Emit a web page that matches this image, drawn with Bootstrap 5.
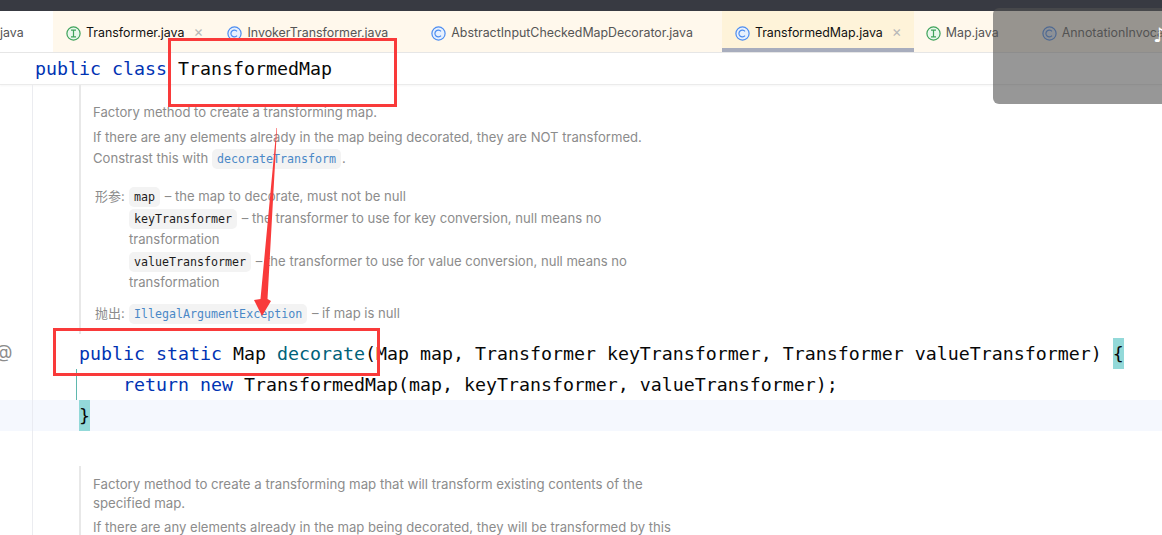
<!DOCTYPE html>
<html lang="en">
<head>
<meta charset="utf-8">
<title>TransformedMap.java</title>
<link href="https://cdn.jsdelivr.net/npm/bootstrap@5.3.0/dist/css/bootstrap.min.css" rel="stylesheet">
<style>
html,body{height:535px;overflow:hidden;background:#fff}
body{position:relative;font-family:Inter,"Noto Sans CJK SC",sans-serif;font-size:13.1px;color:#8c8c8c}
.titlestrip{height:11px;background:#383a42}
.tabstrip{height:42px;background:#fff8ec;border-bottom:1px solid #e6e6e6;white-space:nowrap;overflow:hidden;font-size:12.4px;color:#555}
.tabitem{height:41px;padding:3px 30px 0 13px;gap:5px;flex:none}
.tabitem svg{flex:none}
.tabhome{width:53px;background:#fff;padding:3px 0 0;flex:none;height:41px}
.tabdark{color:#111}
.tabopen{background:#fef3d9;box-shadow:inset 0 -4px 0 #a8adbd;padding-right:31px;margin-left:-1px}
.tabsnug{padding-left:12px}
.tabshut{color:#b8b8b8;font-size:15px;line-height:1;width:9px;margin:-4px -18px 0 4px;flex:none}
.crumbline{height:32px;padding-left:35px;border-bottom:1px solid #ebebeb;box-shadow:0 1px 2px rgba(0,0,0,.04)}
.monotxt{font-family:"DejaVu Sans Mono","Liberation Mono",monospace;font-size:18.27px;color:#080808;white-space:pre}
.kw{color:#0033b3}
.fn{color:#00627a}
.editorpane{height:451px;background:linear-gradient(#ebecf0,#ebecf0) 32px 0/1px 100% no-repeat}
.docblock{margin-left:79px;border-left:2px solid #e8e8e8;padding-left:12px;line-height:21px;width:600px}
.docfirst{padding-top:17px;padding-bottom:10px;margin-bottom:4px;height:249px}
.docnext{margin-top:35px;padding-top:9px;white-space:nowrap}
.docblock p{margin:0}
.gapfour{margin-top:4px!important}
.gapseventeen{margin-top:17px!important}
.gapnine{margin-top:9px!important}
.tight{line-height:19px;font-size:13.24px}
.paramrow{display:grid;grid-template-columns:36px 1fr;line-height:21.5px}
.labelcn{font-size:13px;color:#8c8c8c;padding-left:2px}
.chip{font-family:"DejaVu Sans Mono","Liberation Mono",monospace;font-size:11.65px;line-height:1;background:#f3f3f3;border-radius:5px;padding:3px 5px;color:#1c1c1c;margin-right:1px}
.chiplink{color:#4a88c7}
.coderow{height:31px;padding-left:79px;line-height:31px}
.coderow.deep{padding-left:123px;position:relative}
.changebar{position:absolute;left:76px;top:0;width:1px;height:31px;background:#5fb8ae}
.coderow.focusrow{background:linear-gradient(#e9ebf2,#e9ebf2) 32px 0/1px 100% no-repeat,#f5f8fe}
.brace{background:#93d9d9;display:inline-block;height:31px;vertical-align:top}
.atsign{position:absolute;left:-5px;top:340px;font-size:18px;color:#8c8c8c;line-height:24px}
.redbox{position:absolute;border:3px solid #f93a3a;pointer-events:none}
.boxone{left:168px;top:38px;width:229px;height:69px}
.boxtwo{left:53px;top:328px;width:327px;height:48px}
.arrowlayer{position:absolute;left:0;top:0;pointer-events:none}
.shade{position:absolute;left:993px;top:8px;width:169px;height:96px;background:rgba(82,82,82,.6);border-radius:6px 0 0 6px}
.notemark{position:absolute;left:1153px;top:23px;color:#fff;font-size:20px;line-height:24px;font-family:"DejaVu Sans",sans-serif}
</style>
</head>
<body>
<svg width="0" height="0" class="position-absolute">
  <symbol id="ico-c" viewBox="0 0 15 15"><circle cx="7.5" cy="7.5" r="6.6" fill="#e7f0fe" stroke="#4d8df0" stroke-width="1.2"/><path d="M10 5.4A3.4 3.4 0 1 0 10 9.6" fill="none" stroke="#4d8df0" stroke-width="1.2"/></symbol>
  <symbol id="ico-i" viewBox="0 0 15 15"><circle cx="7.5" cy="7.5" r="6.6" fill="#e9f7ec" stroke="#3fa35b" stroke-width="1.2"/><path d="M5 4.2h5M5 10.8h5M7.5 4.2v6.6" fill="none" stroke="#3fa35b" stroke-width="1.2"/></symbol>
</svg>
<div class="titlestrip"></div>
<div class="tabstrip d-flex">
  <div class="tabhome d-flex align-items-center">java</div>
  <div class="tabitem d-flex align-items-center tabdark"><svg width="15" height="15"><use href="#ico-i"/></svg><span>Transformer.java</span><span class="tabshut">×</span></div>
  <div class="tabitem d-flex align-items-center"><svg width="15" height="15"><use href="#ico-c"/></svg><span>InvokerTransformer.java</span></div>
  <div class="tabitem d-flex align-items-center"><svg width="15" height="15"><use href="#ico-c"/></svg><span>AbstractInputCheckedMapDecorator.java</span></div>
  <div class="tabitem d-flex align-items-center tabdark tabopen"><svg width="15" height="15"><use href="#ico-c"/></svg><span>TransformedMap.java</span><span class="tabshut">×</span></div>
  <div class="tabitem tabsnug d-flex align-items-center"><svg width="15" height="15"><use href="#ico-i"/></svg><span>Map.java</span></div>
  <div class="tabitem d-flex align-items-center"><svg width="15" height="15"><use href="#ico-c"/></svg><span>AnnotationInvocationHandler.java</span></div>
</div>
<div class="crumbline d-flex align-items-center monotxt"><span class="kw">public class </span>TransformedMap</div>
<div class="editorpane">
  <div class="docblock docfirst">
    <p>Factory method to create a transforming map.</p>
    <p class="gapfour">If there are any elements already in the map being decorated, they are NOT transformed.<br>Constrast this with <span class="chip chiplink">decorateTransform</span>.</p>
    <div class="paramrow gapseventeen">
      <span class="labelcn">形参:</span>
      <div><span class="chip">map</span> – the map to decorate, must not be null<br>
      <span class="chip">keyTransformer</span> – the transformer to use for key conversion, null means no<br>transformation<br>
      <span class="chip">valueTransformer</span> – the transformer to use for value conversion, null means no<br>transformation</div>
    </div>
    <div class="paramrow gapnine">
      <span class="labelcn">抛出:</span>
      <div><span class="chip chiplink">IllegalArgumentException</span> – if map is null</div>
    </div>
  </div>
  <div class="coderow monotxt"><span class="kw">public static </span>Map <span class="fn">decorate</span>(Map map, Transformer keyTransformer, Transformer valueTransformer) <span class="brace">{</span></div>
  <div class="coderow deep monotxt"><span class="changebar"></span><span class="kw">return new </span>TransformedMap(map, keyTransformer, valueTransformer);</div>
  <div class="coderow focusrow monotxt"><span class="brace">}</span></div>
  <div class="docblock docnext">
    <p class="tight">Factory method to create a transforming map that will transform existing contents of the<br>specified map.</p>
    <p class="gapfour">If there are any elements already in the map being decorated, they will be transformed by this</p>
  </div>
</div>
<span class="atsign">@</span>
<div class="redbox boxone"></div>
<div class="redbox boxtwo"></div>
<svg class="arrowlayer" width="1162" height="535"><polygon points="276.5,128 277,128 267.5,299 271,301 262,316 254,300 260.5,299" fill="#f93a3a"/></svg>
<div class="shade"></div>
<span class="notemark">♪</span>
<script src="https://cdn.jsdelivr.net/npm/bootstrap@5.3.0/dist/js/bootstrap.bundle.min.js"></script>
</body>
</html>
